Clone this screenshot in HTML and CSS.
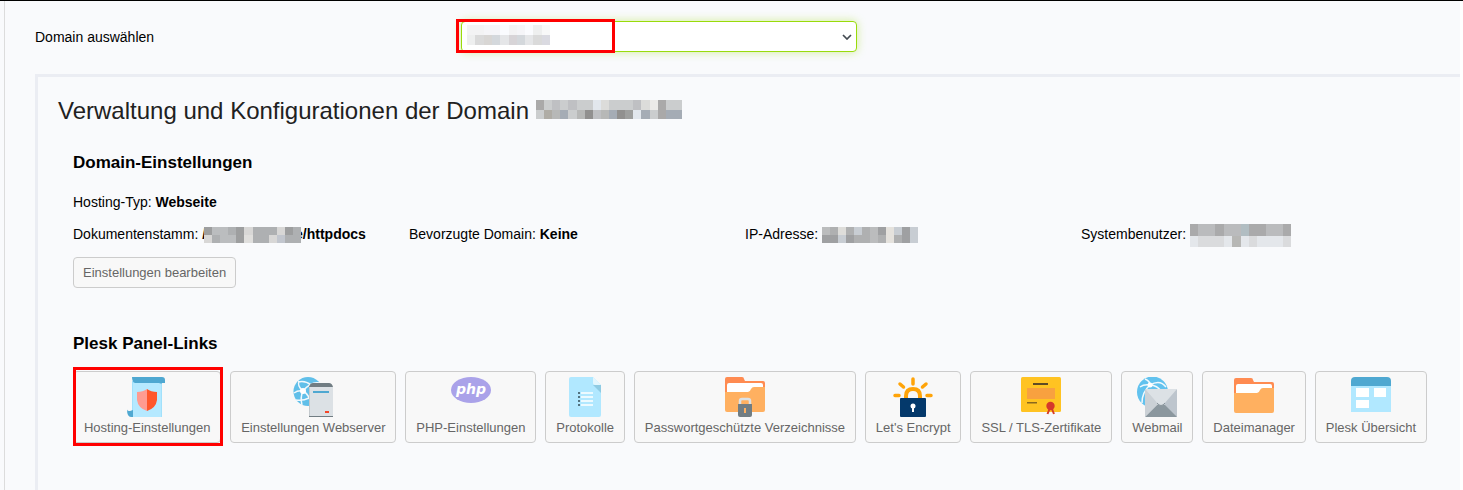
FILE: index.html
```html
<!DOCTYPE html>
<html lang="de">
<head>
  <meta charset="UTF-8">
  <meta name="viewport" content="width=device-width, initial-scale=1.0">
  <title>Domain-Verwaltung</title>
  <link rel="stylesheet" href="styles.css">
</head>
<body>
  <main class="page">
    <form class="domain-form">
      <label for="domain">Domain auswählen</label>
      <div class="select-wrap">
        <select id="domain"><option></option></select>
        <svg class="mosaic select-mosaic" viewBox="0 0 10 2" preserveAspectRatio="none">
          <path fill="#f3f3f4" d="M0 0h2v1h-2zM5 0h1v1h-1z"/><path fill="#f5f5f8" d="M2 0h2v1h-2zM6 0h1v1h-1z"/><path fill="#fafbfe" d="M4 0h1v1h-1zM7 0h1v1h-1z"/><path fill="#eeefef" d="M8 0h1v1h-1zM0 1h1v1h-1z"/><path fill="#f8f8f8" d="M9 0h1v1h-1z"/>
          <path fill="#dadada" d="M1 1h1v1h-1zM8 1h1v1h-1z"/><path fill="#d8d6d4" d="M2 1h1v1h-1z"/><path fill="#d4d8dc" d="M3 1h1v1h-1zM6 1h1v1h-1z"/><path fill="#e5e6e8" d="M4 1h1v1h-1zM7 1h1v1h-1z"/><path fill="#d7d4d7" d="M5 1h1v1h-1z"/><path fill="#dadae1" d="M9 1h1v1h-1z"/>
        </svg>
        <svg class="chevron" viewBox="0 0 10 6"><path d="M1 1l4 4 4-4" fill="none" stroke="#444b52" stroke-width="1.7"/></svg>
        <span class="mark mark-select"></span>
      </div>
    </form>

    <section class="panel">
      <h2>Verwaltung und Konfigurationen der Domain
        <svg class="mosaic title-mosaic" viewBox="0 0 18 2" preserveAspectRatio="none">
          <path fill="#cbcdce" d="M0 0h18v2h-18z"/>
          <path fill="#aaa9a9" d="M0 0h1v1h-1zM15 0h1v2h-1z"/><path fill="#bfc0c3" d="M2 0h1v1h-1zM4 0h1v1h-1zM12 0h1v1h-1zM7 1h1v1h-1z"/><path fill="#e2e7ed" d="M7 0h1v1h-1zM12 1h1v1h-1z"/><path fill="#dcdcda" d="M8 0h1v1h-1zM13 0h1v1h-1z"/><path fill="#ebeae8" d="M14 0h1v1h-1z"/>
          <path fill="#afaca5" d="M1 1h1v1h-1z"/><path fill="#b7b8b7" d="M2 1h1v1h-1zM5 1h1v1h-1zM8 1h1v1h-1z"/><path fill="#a5acb5" d="M3 1h1v1h-1zM9 1h1v1h-1zM13 1h1v1h-1zM16 1h2v1h-2z"/><path fill="#91908f" d="M6 1h1v1h-1zM10 1h1v1h-1z"/><path fill="#9e9f9e" d="M11 1h1v1h-1z"/>
        </svg>
      </h2>

      <div class="block settings">
        <h3>Domain-Einstellungen</h3>
        <div class="facts">
          <p class="full">Hosting-Typ: <b>Webseite</b></p>
          <p>Dokumentenstamm: <b>/<svg class="mosaic root-mosaic" viewBox="0 0 12 2" preserveAspectRatio="none"><path fill="#aeb0b2" d="M0 0h12v2h-12z"/><path fill="#9d9e9f" d="M0 0h1v1h-1zM4 0h1v2h-1zM10 0h1v1h-1z"/><path fill="#bbbdbf" d="M1 0h2v1h-2zM2 1h2v1h-2z"/><path fill="#d8d7d6" d="M5 0h1v1h-1zM0 1h1v1h-1zM9 0h1v1h-1zM8 1h1v1h-1z"/><path fill="#e0dfdd" d="M5 1h1v1h-1z"/><path fill="#c2c6ce" d="M9 1h1v1h-1z"/></svg>e/httpdocs</b></p>
          <p>Bevorzugte Domain: <b>Keine</b></p>
          <p>IP-Adresse:
            <svg class="mosaic ip-mosaic" viewBox="0 0 12 2" preserveAspectRatio="none"><path fill="#afb0b1" d="M0 0h12v2h-12z"/><path fill="#bbbcbd" d="M0 0h1v1h-1zM6 0h1v1h-1zM6 1h1v1h-1z"/><path fill="#deddda" d="M2 0h1v1h-1z"/><path fill="#c8cdd3" d="M4 0h1v1h-1zM2 1h1v1h-1zM9 0h1v1h-1zM11 0h1v2h-1z"/><path fill="#9fa0a2" d="M0 1h2v1h-2zM3 1h1v1h-1zM7 0h1v1h-1zM10 0h1v2h-1z"/><path fill="#e5e2dd" d="M8 0h1v2h-1z"/></svg>
          </p>
          <p>Systembenutzer:
            <svg class="mosaic user-mosaic" viewBox="0 0 12 2" preserveAspectRatio="none"><path fill="#babbbd" d="M0 0h12v1h-12z"/><path fill="#dadbdd" d="M0 1h12v1h-12z"/><path fill="#aaaaab" d="M0 0h1v1h-1zM3 0h1v1h-1zM7 0h2v1h-2zM11 0h1v1h-1z"/><path fill="#b1bdc2" d="M6 0h1v1h-1z"/><path fill="#b7b7b5" d="M5 1h1v1h-1z"/><path fill="#e4e7eb" d="M0 1h1v1h-1zM4 1h1v1h-1zM6 1h1v1h-1zM8 1h3v1h-3z"/></svg>
          </p>
        </div>
        <button type="button" class="btn edit-btn">Einstellungen bearbeiten</button>
      </div>

      <div class="block links">
        <h3>Plesk Panel-Links</h3>
        <div class="tiles">
          <button type="button" class="btn tile marked">
            <svg class="icon" viewBox="0 0 40 40"><path fill="#a2e1fb" d="M5 4h30v36H5z"/><path fill="#b5e9ff" d="M6 6h28v34H6z"/><path fill="#4fa8d1" d="M5 0h30q3 0 3 3v3h-3q0 1-3 0H8Q5 5 5 0zM0 32q0 2 3 2l3-1v7H4q-4 0-4-8z"/><path fill="#ff9b91" d="M20 12q-4 3-10 3v8q1 8 10 11z"/><path fill="#ff562b" d="M20 12q4 3 10 3v8q-1 8-10 11z"/></svg>
            <span>Hosting-Einstellungen</span>
            <span class="mark mark-tile"></span>
          </button>
          <button type="button" class="btn tile">
            <svg class="icon" viewBox="0 0 40 40"><circle cx="15" cy="14.5" r="14.5" fill="#60bfe9"/><g fill="none" stroke="#f1f9fd" stroke-width="1.5"><path d="M10 14Q4 9 6 4M10 14Q18 4 27 6M10 14q-3 6-1 14M10 14q7 4 8 14M10 14q-5-1-9 2M5 5q7-2 13 3 6 5 8 11M3 23q7 1 13-2"/></g><circle cx="10" cy="14" r="3" fill="#fff"/><path fill="#dce1e5" d="M16 10h24v30H16z"/><path fill="#717d83" d="M16 10q1-4 4-4h16q3 0 4 4zM16 39h24v1H16z"/><path fill="#c3c9cd" d="M16 10h1v29h-1z"/><path fill="#4fa8d1" d="M20 14h16v2H20z"/><path fill="#f44528" d="M32 34h4v2h-4z"/></svg>
            <span>Einstellungen Webserver</span>
          </button>
          <button type="button" class="btn tile">
            <svg class="icon" viewBox="0 0 40 40"><ellipse cx="20" cy="13" rx="20" ry="13" fill="#aaa2e9"/><text class="php" x="20" y="17" text-anchor="middle">php</text></svg>
            <span>PHP-Einstellungen</span>
          </button>
          <button type="button" class="btn tile">
            <svg class="icon" viewBox="0 0 40 40"><path fill="#b1e8ff" d="M6 0h22l8 8v30q0 2-2 2H6q-2 0-2-2V2q0-2 2-2z"/><path fill="#8fcbe3" d="M28 8h8v8z"/><path fill="#e3f6fd" d="M28 0l8 8h-6q-2 0-2-2z"/><path stroke="#fff" stroke-width="1.5" d="M16 16h12M16 20h12M16 24h12M16 28h12"/><path stroke="#53727f" stroke-width="2" stroke-dasharray="2 2" d="M14 15v14"/></svg>
            <span>Protokolle</span>
          </button>
          <button type="button" class="btn tile">
            <svg class="icon" viewBox="0 0 40 40"><path fill="#ff8b51" d="M2 0h15q2 0 2 2l1 2h18q2 0 2 2v12H0V2q0-2 2-2z"/><path fill="#fff" d="M4 6h32q2 0 2 2v8H2V8q0-2 2-2z"/><path fill="#ffb060" d="M0 15h23q2 0 3-3 1-2 3-2h11v23q0 2-2 2H2q-2 0-2-2z"/><path fill="none" stroke="#dce1e5" stroke-width="2.5" d="M15 29v-5q0-2 2-2h6q2 0 2 2v5"/><path fill="#717d83" d="M13 27h14v11q0 2-2 2H15q-2 0-2-2z"/><path fill="#ffb060" d="M19 31h2v5h-2z"/></svg>
            <span>Passwortgeschützte Verzeichnisse</span>
          </button>
          <button type="button" class="btn tile">
            <svg class="icon" viewBox="0 0 40 40"><path stroke="#ffa409" stroke-width="3.5" stroke-linecap="round" d="M20 2v5M7 7l3.5 3M33 7l-3.5 3M2 18.5h4M34 18.5h4"/><path fill="none" stroke="#ffa409" stroke-width="4" d="M13 22v-3q0-7 7-7t7 7v3"/><rect x="7" y="21" width="26" height="19" rx="1" fill="#04396b"/><circle cx="20" cy="29" r="2.5" fill="#fff"/><path fill="#fff" d="M19 30h2v5h-2z"/></svg>
            <span>Let's Encrypt</span>
          </button>
          <button type="button" class="btn tile">
            <svg class="icon" viewBox="0 0 40 40"><rect width="40" height="35" rx="1.5" fill="#ffc322"/><path fill="#5f4b24" d="M12 6h15v2H12z"/><path fill="#f8a13f" d="M6 11h28v11H6z"/><path fill="#8a681e" d="M6 25h10v1.5H6z"/><path fill="none" stroke="#d53d27" stroke-width="2" d="M28.5 32l-2 5M31 32l2 5"/><circle cx="29.5" cy="29" r="4.2" fill="#d5382b"/></svg>
            <span>SSL / TLS-Zertifikate</span>
          </button>
          <button type="button" class="btn tile">
            <svg class="icon" viewBox="0 0 40 40"><circle cx="15.5" cy="15" r="15.5" fill="#62c2ee"/><g fill="none" stroke="#f1f9fd" stroke-width="1.5"><path d="M13 8Q5 15 5 26M13 8q10-6 16 2M13 8q7 0 12 7M13 8Q7 7 3 10M8 2q5 2 5 6"/></g><circle cx="13" cy="8" r="2.5" fill="#fff"/><rect x="8" y="12" width="32" height="28" rx="1" fill="#bdc5cd"/><path fill="#8b979e" d="M8 40l12-12h8l12 12z"/><path fill="#cbd1d6" d="M8 12l13 15L8 40z"/><path fill="#dce1e5" d="M8 12h32L27 27q-3 3-6 0z"/><path fill="none" stroke="#89949b" d="M20 26q4 5 8 0"/></svg>
            <span>Webmail</span>
          </button>
          <button type="button" class="btn tile">
            <svg class="icon" viewBox="0 0 40 40"><path fill="#ff8b51" d="M2 1h15q2 0 2 2l1 2h18q2 0 2 2v12H0V3q0-2 2-2z"/><path fill="#fff" d="M4 7h32q2 0 2 2v8H2V9q0-2 2-2z"/><path fill="#ffb060" d="M0 16h23q2 0 3-3 1-2 3-2h11v23q0 2-2 2H2q-2 0-2-2z"/></svg>
            <span>Dateimanager</span>
          </button>
          <button type="button" class="btn tile">
            <svg class="icon" viewBox="0 0 40 40"><path fill="#b1e8ff" d="M0 8h40v27H0z"/><path fill="#4fa8d1" d="M0 9V4q0-4 4-4h32q4 0 4 4v5z"/><path fill="#fff" d="M5 11h13v9H5zM23 11h12v9H23zM5 23h13v8H5z"/></svg>
            <span>Plesk Übersicht</span>
          </button>
        </div>
      </div>
    </section>
  </main>
</body>
</html>
```
FILE: styles.css
```css
* {
  box-sizing: border-box;
}
html, body {
  height: 100%;
}
body {
  margin: 0;
  padding: 0 3px 0 4px;
  border-top: 1px solid #000;
  background: linear-gradient(to left, #fff 3px, #f9fafc 3px);
  color: #000;
  font-family: "Liberation Sans", Arial, sans-serif;
  font-size: 14px;
  line-height: 20px;
}
.page {
  display: flex;
  flex-direction: column;
  min-height: 100%;
  padding: 20px 0 0 30px;
  border-left: 1px solid #dcdcdc;
}
.domain-form {
  display: grid;
  grid-template-columns: 426px minmax(0, 396px);
  align-items: center;
  margin-bottom: 22px;
}
.select-wrap {
  display: flex;
  position: relative;
}
select {
  width: 100%;
  height: 31px;
  border: 1px solid #99db0b;
  border-radius: 4px;
  background: #fff;
  box-shadow: 0 0 10px rgba(153, 219, 11, 0.4);
  appearance: none;
}
.chevron {
  position: absolute;
  right: 5px;
  top: 13px;
  width: 10px;
  height: 6px;
}
.mosaic {
  shape-rendering: crispEdges;
}
.select-mosaic {
  position: absolute;
  left: 6px;
  top: 4px;
  width: 83px;
  height: 20px;
}
.mark {
  position: absolute;
  border: 3px solid #f00;
  pointer-events: none;
}
.mark-select {
  left: -5px;
  top: -2px;
  width: 159px;
  height: 34px;
}
.panel {
  flex: 1;
  padding: 19px 20px;
  border: solid #ebedf3;
  border-width: 3px 0 0 3px;
}
h2, h3, p {
  margin: 0;
}
h2 {
  color: #212121;
  font-size: 24px;
  font-weight: 400;
  line-height: 30px;
}
.title-mosaic {
  width: 146px;
  height: 19px;
}
.block {
  padding-left: 15px;
}
h3 {
  font-size: 17px;
  line-height: 20px;
}
.settings {
  padding-top: 27px;
}
.facts {
  display: grid;
  grid-template-columns: repeat(4, 1fr);
  row-gap: 12px;
  margin: 19px 23px 13px 0;
}
.full {
  grid-column: 1 / -1;
}
.facts p {
  height: 20px;
  white-space: nowrap;
}
.facts .mosaic {
  height: 16px;
  vertical-align: middle;
}
.root-mosaic {
  position: relative;
  width: 97px;
  margin: 0 -6px 0 -2px;
}
.ip-mosaic {
  width: 96px;
}
.facts .user-mosaic {
  width: 101px;
  height: 23px;
}
.btn {
  padding: 5px 9px;
  border: 1px solid #ccc;
  border-radius: 4px;
  background: #f8f8f8;
  color: #666;
  font: inherit;
  font-size: 13px;
}
.edit-btn {
  display: block;
  height: 31px;
  line-height: 19px;
}
.links {
  padding-top: 46px;
}
.tiles {
  display: flex;
  flex-wrap: wrap;
  gap: 9px;
  margin: 17px 13px 0 0;
}
.tile {
  display: flex;
  flex: auto;
  flex-direction: column;
  align-items: center;
  gap: 1px;
  padding-bottom: 4px;
}
.icon {
  width: 40px;
  height: 40px;
}
.php {
  fill: #fff;
  font: italic bold 14px "DejaVu Sans", sans-serif;
}
.marked {
  position: relative;
}
.mark-tile {
  inset: -5px -3px -4px -1px;
}
```
